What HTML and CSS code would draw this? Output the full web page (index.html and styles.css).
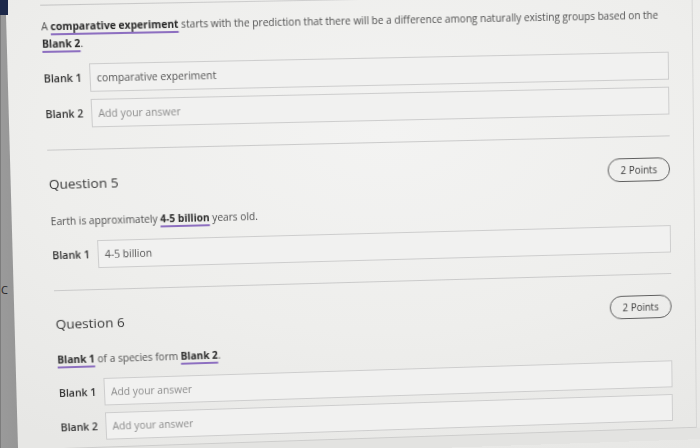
FILE: index.html
```html
<!DOCTYPE html>
<html lang="en">
<head>
<meta charset="utf-8">
<title>Quiz</title>
<link rel="stylesheet" href="styles.css">
</head>
<body>
<div class="screen">
  <aside class="edge">
    <div class="edge-top"></div>
    <div class="edge-bar"><span class="edge-mark">C</span></div>
  </aside>
  <main class="page">
    <div class="page-inner">
      <div class="topline"></div>

      <section class="q q-first">
        <p class="prompt">A <span class="blank-ref">comparative experiment</span> starts with the prediction that there will be a difference among naturally existing groups based on the <span class="blank-ref">Blank 2</span>.</p>
        <div class="blanks">
          <div class="blank"><span class="blank-label">Blank 1</span><div class="answer">comparative experiment</div></div>
          <div class="blank"><span class="blank-label">Blank 2</span><div class="answer empty">Add your answer</div></div>
        </div>
      </section>

      <div class="sep"></div>

      <section class="q">
        <div class="q-head">
          <h2 class="q-title">Question 5</h2>
          <span class="points">2 Points</span>
        </div>
        <p class="prompt">Earth is approximately <span class="blank-ref">4-5 billion</span> years old.</p>
        <div class="blanks">
          <div class="blank"><span class="blank-label">Blank 1</span><div class="answer">4-5 billion</div></div>
        </div>
      </section>

      <div class="sep"></div>

      <section class="q">
        <div class="q-head">
          <h2 class="q-title">Question 6</h2>
          <span class="points">2 Points</span>
        </div>
        <p class="prompt"><span class="blank-ref">Blank 1</span> of a species form <span class="blank-ref">Blank 2</span>.</p>
        <div class="blanks">
          <div class="blank"><span class="blank-label">Blank 1</span><div class="answer empty">Add your answer</div></div>
          <div class="blank"><span class="blank-label">Blank 2</span><div class="answer empty">Add your answer</div></div>
        </div>
      </section>
    </div>
    <div class="foot"></div>
  </main>
</div>
</body>
</html>
```
FILE: styles.css
```css
html, body {
  margin: 0;
  padding: 0;
}

body {
  width: 700px;
  height: 448px;
  overflow: hidden;
  background: radial-gradient(ellipse 90% 80% at 55% 30%, #f3f3f2 0%, #eeeeec 55%, #e7e7e5 100%);
  font-family: "Open Sans", "DejaVu Sans", sans-serif;
}

.screen {
  display: flex;
  height: 448px;
}

/* cut-off sidebar at the left edge of the photo */
.edge {
  position: relative;
  z-index: 2;
  width: 18px;
  height: 448px;
  flex: 0 0 18px;
  display: flex;
  flex-direction: column;
}

.edge-top {
  flex: none;
  width: 8px;
  height: 15px;
  background-color: #1c2849;
}

.edge-bar {
  flex: 1;
  width: 18px;
  background: linear-gradient(90deg, #7c7c7c 0, #7c7c7c 1.5px, #9a9a9a 1.5px, #969696 100%);
  clip-path: polygon(0 0, 6px 0, 18px 100%, 0 100%);
}

.edge-mark {
  display: block;
  margin-top: 268px;
  padding-left: 1px;
  font-size: 11px;
  line-height: 14px;
  color: #262626;
}

/* the quiz page, photographed at a slight angle */
.page {
  position: relative;
  z-index: 1;
  width: 676px;
  flex: none;
  transform-origin: -18px 0;
  transform: matrix3d(1.030451, -0.018319, 0, 0.000035894,
                      0.052387, 1.032014, 0, 0.000060507,
                      0, 0, 1, 0,
                      -5.3865, 0.3565, 0, 1);
}

.page-inner {
  box-sizing: border-box;
  width: 676px;
  padding: 5px 24px 6.5px 26px;
  border-right: 1px solid #d5d5d4;
  border-bottom: 1px solid #cdcdcc;
}

.topline {
  height: 1px;
  background: linear-gradient(90deg, #c4c4c4 0%, #cfcfcf 45%, rgba(210, 210, 210, 0) 72%);
}

.prompt {
  margin: 16.5px 0 0;
  font-size: 10.15px;
  line-height: 17px;
  color: #505050;
}

.q-first .prompt {
  margin-top: 12px;
}

.blank-ref {
  font-weight: 700;
  color: #2a2a2a;
  text-decoration: underline;
  text-decoration-color: #8d6fc0;
  text-decoration-thickness: 1.5px;
  text-underline-offset: 3px;
}

.blanks {
  margin-top: 11px;
  display: flex;
  flex-direction: column;
  gap: 7px;
}

.blank {
  display: flex;
  align-items: center;
  height: 28px;
}

.blank-label {
  width: 45px;
  flex: none;
  font-size: 10.5px;
  font-weight: 600;
  color: #323232;
}

.answer {
  flex: 1;
  height: 28px;
  box-sizing: border-box;
  border: 1px solid #cdcdcd;
  background: #f1f1f0;
  padding: 0 6px;
  display: flex;
  align-items: center;
  font-size: 10.3px;
  color: #555555;
}

.answer.empty {
  color: #8c8c8c;
}

.sep {
  height: 1px;
  margin-top: 21px;
  background: #cacaca;
}

.q-head {
  margin-top: 21px;
  height: 24px;
  display: flex;
  align-items: center;
  justify-content: space-between;
}

.q-title {
  margin: 0;
  font-size: 13.5px;
  font-weight: 400;
  color: #393939;
}

.points {
  width: 64px;
  height: 24px;
  box-sizing: border-box;
  border: 1px solid #5e5e5e;
  border-radius: 12px;
  display: flex;
  align-items: center;
  justify-content: center;
  font-size: 10px;
  color: #3b3b3b;
}

.foot {
  height: 12px;
  margin-right: -24px;
  background: #e3e3e1;
}
```
